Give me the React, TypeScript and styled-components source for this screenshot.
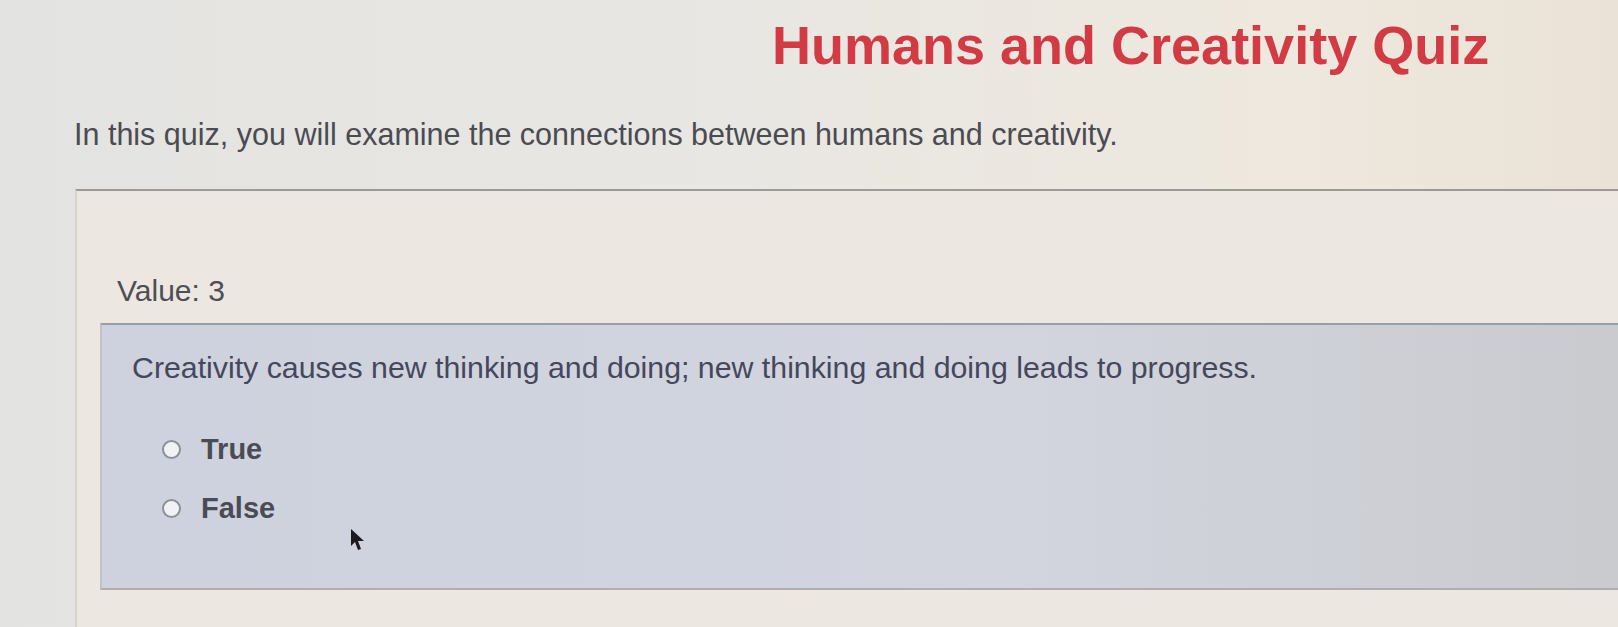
import React from "react";
import styled, { createGlobalStyle } from "styled-components";

const GlobalStyle = createGlobalStyle`
  html, body {
    margin: 0;
    padding: 0;
    height: 100%;
  }
  body {
    font-family: "Liberation Sans", Arial, sans-serif;
    background: linear-gradient(90deg, #e3e3e1 0%, #e9e7e3 45%, #eee8de 80%, #eae2d6 100%);
    overflow: hidden;
  }
`;

const Page = styled.main`
  position: relative;
  height: 627px;
  overflow: hidden;
`;

const Title = styled.h1`
  margin: 0;
  padding: 15px 0 0 772px;
  font-size: 54px;
  line-height: 60px;
  font-weight: 700;
  color: #d23a44;
`;

const Intro = styled.p`
  margin: 42px 0 0 74px;
  font-size: 30.5px;
  line-height: 34px;
  color: #4b4b52;
`;

const QuestionFrame = styled.section`
  margin: 38px 0 0 75px;
  border: 2px solid #9c9a97;
  border-left-color: #d6d3cf;
  border-right: none;
  border-bottom: none;
  background: #ece8e1;
  padding-top: 83px;
  height: 600px;
`;

const ValueLabel = styled.div`
  margin-left: 40px;
  font-size: 30px;
  line-height: 34px;
  color: #4e4e55;
`;

const QuestionBody = styled.div`
  margin: 15px 0 0 23px;
  background: linear-gradient(90deg, #cdd2de 0%, #d2d5de 60%, #c9cbcf 100%);
  border-top: 2px solid #9a9da5;
  border-left: 2px solid #bfc2c8;
  border-bottom: 2px solid #b3adb0;
  padding: 26px 0 63px 30px;
`;

const QuestionText = styled.p`
  margin: 0;
  font-size: 30.3px;
  line-height: 34px;
  color: #45475a;
`;

const Options = styled.div`
  display: flex;
  flex-direction: column;
  gap: 25px;
  margin: 47px 0 0 30px;
`;

const Option = styled.label`
  display: flex;
  align-items: center;
  gap: 20px;
  height: 34px;
  font-size: 29px;
  font-weight: 700;
  color: #4a4c55;
`;

const Radio = styled.span`
  width: 19px;
  height: 19px;
  border-radius: 50%;
  border: 2px solid #8e9097;
  background: #f1f2f5;
  box-sizing: border-box;
`;

const Cursor = styled.svg`
  position: absolute;
  left: 350px;
  top: 528px;
  width: 16px;
  height: 24px;
`;

export default function App() {
  return (
    <Page>
      <GlobalStyle />
      <Title>Humans and Creativity Quiz</Title>
      <Intro>In this quiz, you will examine the connections between humans and creativity.</Intro>
      <QuestionFrame>
        <ValueLabel>Value: 3</ValueLabel>
        <QuestionBody>
          <QuestionText>
            Creativity causes new thinking and doing; new thinking and doing leads to progress.
          </QuestionText>
          <Options>
            <Option>
              <Radio />
              True
            </Option>
            <Option>
              <Radio />
              False
            </Option>
          </Options>
        </QuestionBody>
      </QuestionFrame>
      <Cursor viewBox="0 0 16 24">
        <path d="M1 1 L1 18 L5 14 L8 22 L11 21 L8 13 L14 13 Z" fill="#1b1b1f" />
      </Cursor>
    </Page>
  );
}
